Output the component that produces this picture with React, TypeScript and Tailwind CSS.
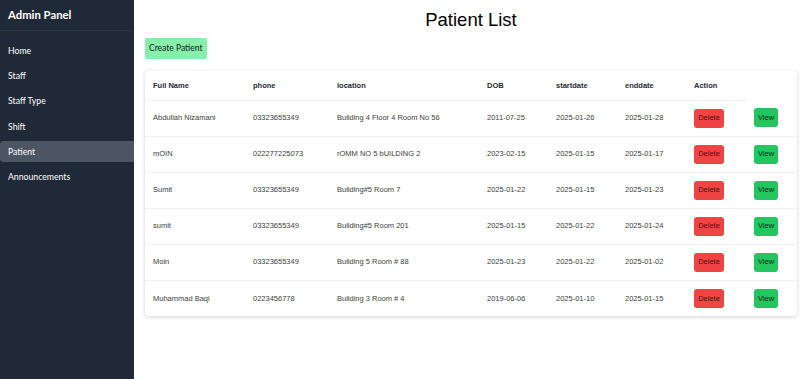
import React from 'react';

const navItems = ['Home', 'Staff', 'Staff Type', 'Shift', 'Patient', 'Announcements'];

const patients = [
  { name: 'Abdullah Nizamani', phone: '03323655349', location: 'Building 4 Floor 4 Room No 56', dob: '2011-07-25', start: '2025-01-26', end: '2025-01-28' },
  { name: 'mOIN', phone: '022277225073', location: 'rOMM NO 5 bUILDING 2', dob: '2023-02-15', start: '2025-01-15', end: '2025-01-17' },
  { name: 'Sumit', phone: '03323655349', location: 'Building#5 Room 7', dob: '2025-01-22', start: '2025-01-15', end: '2025-01-23' },
  { name: 'sumit', phone: '03323655349', location: 'Building#5 Room 201', dob: '2025-01-15', start: '2025-01-22', end: '2025-01-24' },
  { name: 'Moin', phone: '03323655349', location: 'Building 5 Room # 88', dob: '2025-01-23', start: '2025-01-22', end: '2025-01-02' },
  { name: 'Muhammad Baqi', phone: '0223456778', location: 'Building 3 Room # 4', dob: '2019-06-06', start: '2025-01-10', end: '2025-01-15' },
];

const Sidebar: React.FC = () => (
  <aside className="w-[134px] shrink-0 h-screen bg-[#1f2937] text-white font-['Lato',sans-serif]">
    <div className="h-[31px] flex items-center px-2 border-b border-[#2b3544]">
      <h1 className="text-[11.3px] font-bold">Admin Panel</h1>
    </div>
    <nav className="flex flex-col gap-[4.2px] pt-[9px]">
      {navItems.map((item) => (
        <a
          key={item}
          href="#"
          className={`h-[21px] flex items-center px-2 text-[8.7px] rounded-l ${item === 'Patient' ? 'bg-[#4b5563]' : ''}`}
        >
          {item}
        </a>
      ))}
    </nav>
  </aside>
);

const PatientTable: React.FC = () => (
  <div className="bg-white rounded shadow-[0_1px_4px_rgba(0,0,0,0.18)] overflow-hidden">
    <table className="w-full table-fixed border-collapse font-['Liberation_Sans',Arial,sans-serif] text-[7.5px]">
      <thead>
        <tr className="h-[29px] text-left text-[#1f2937]">
          <th className="w-[100px] px-2 font-bold border-b border-[#f0f0f0]">Full Name</th>
          <th className="w-[84px] px-2 font-bold border-b border-[#f0f0f0]">phone</th>
          <th className="w-[150px] px-2 font-bold border-b border-[#f0f0f0]">location</th>
          <th className="w-[69px] px-2 font-bold border-b border-[#f0f0f0]">DOB</th>
          <th className="w-[69px] px-2 font-bold border-b border-[#f0f0f0]">startdate</th>
          <th className="w-[69px] px-2 font-bold border-b border-[#f0f0f0]">enddate</th>
          <th className="w-[60px] px-2 font-bold border-b border-[#f0f0f0]">Action</th>
          <th className="px-2"></th>
        </tr>
      </thead>
      <tbody className="text-[#404040]">
        {patients.map((p, i) => (
          <tr key={i} className={`h-[36px] ${i < patients.length - 1 ? 'border-b border-[#f0f0f0]' : ''}`}>
            <td className="px-2 truncate">{p.name}</td>
            <td className="px-2">{p.phone}</td>
            <td className="px-2">{p.location}</td>
            <td className="px-2">{p.dob}</td>
            <td className="px-2">{p.start}</td>
            <td className="px-2">{p.end}</td>
            <td className="px-2">
              <button className="w-[30px] h-[19px] rounded-[3px] bg-[#ef4444] text-[#4a1212] text-[7.5px]">Delete</button>
            </td>
            <td className="px-2">
              <button className="w-[24px] h-[19px] rounded-[3px] bg-[#22c55e] text-[#0f2a17] text-[7.5px]">View</button>
            </td>
          </tr>
        ))}
      </tbody>
    </table>
  </div>
);

export default function App() {
  return (
    <div className="flex w-full h-screen bg-white overflow-hidden">
      <Sidebar />
      <main className="flex-1 pl-[11px] pr-[9px]">
        <h2 className="text-center text-[18.5px] leading-none pt-[11px] h-[38px] text-black font-['Liberation_Sans',Arial,sans-serif]">
          Patient List
        </h2>
        <div className="flex">
          <button className="h-[21px] px-[4px] bg-[#86efac] text-[8.5px] text-[#14201a] rounded-[2px] font-['Lato',sans-serif]">
            Create Patient
          </button>
        </div>
        <div className="mt-[12px]">
          <PatientTable />
        </div>
      </main>
    </div>
  );
}
